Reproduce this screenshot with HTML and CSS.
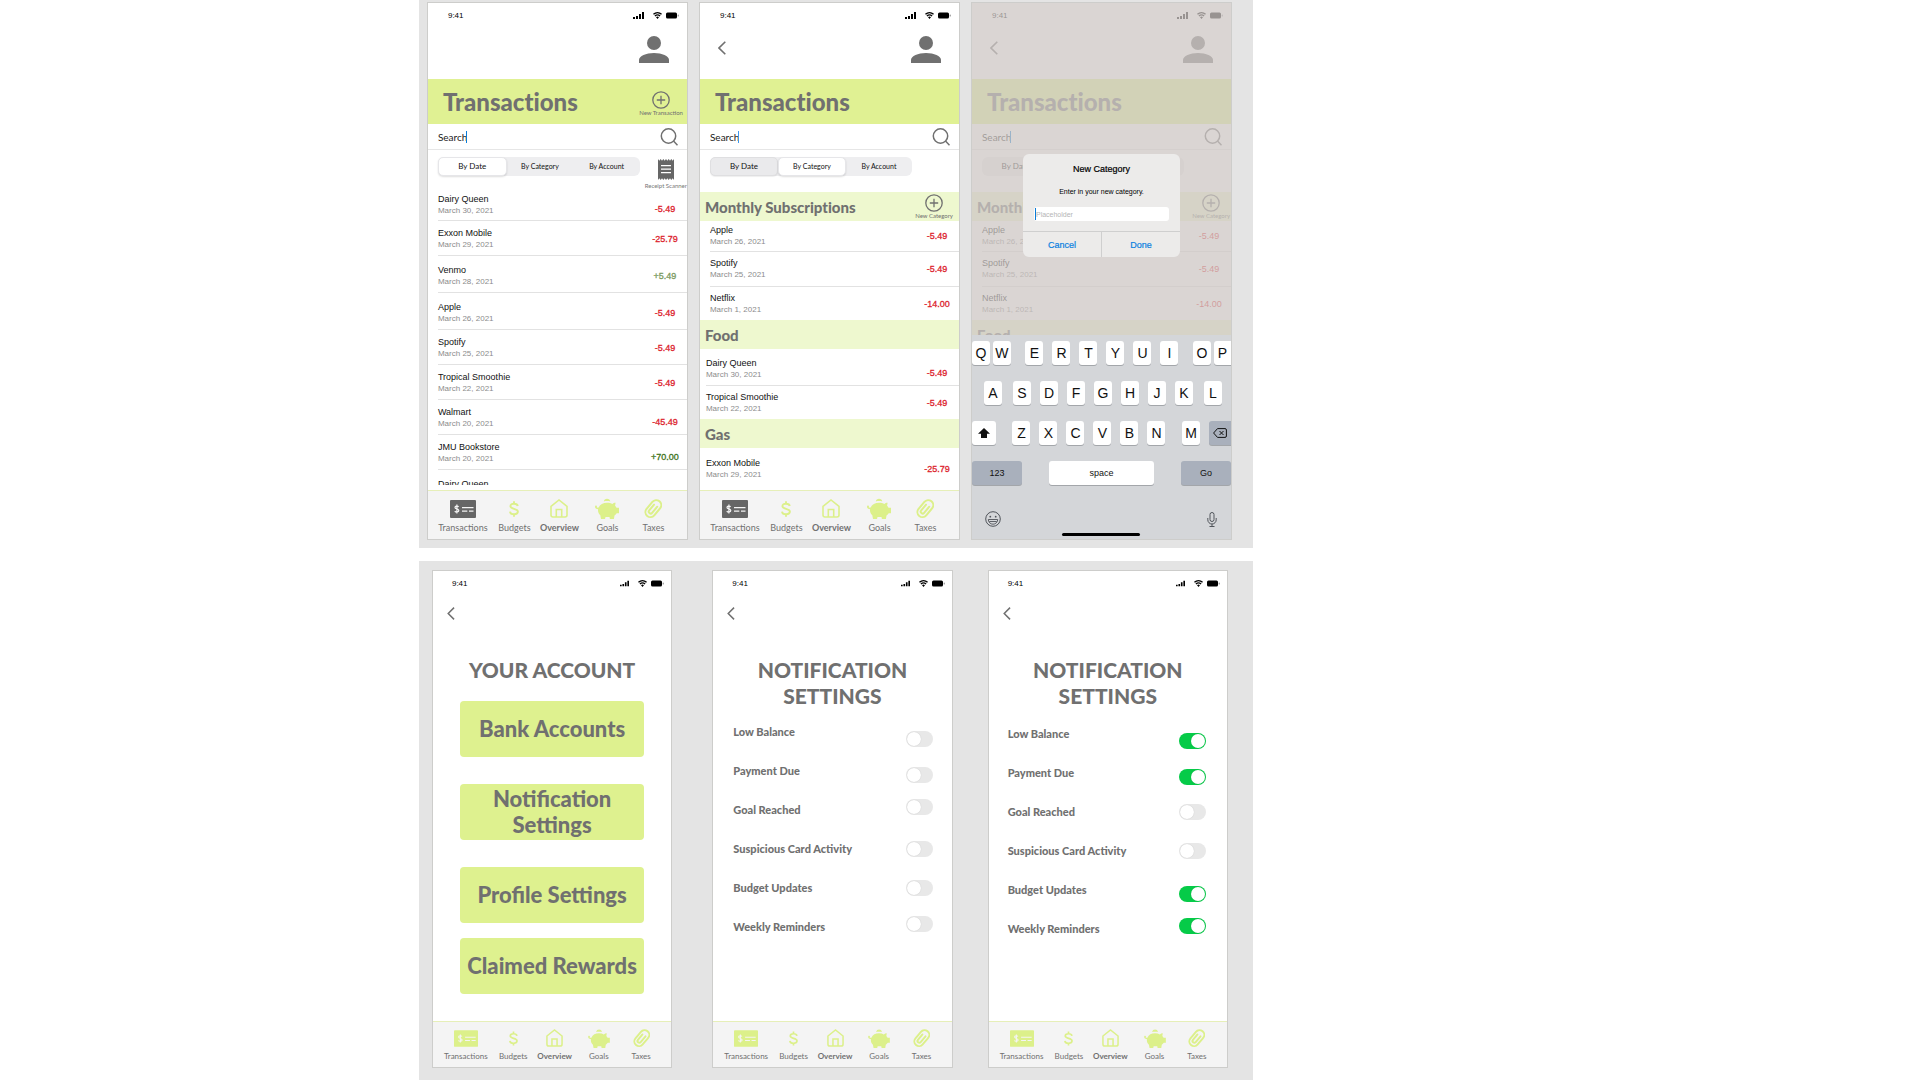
FILE: index.html
```html
<!DOCTYPE html>
<html lang="en">
<head>
<meta charset="utf-8">
<meta name="viewport" content="width=device-width, initial-scale=1">
<title>Budget app screens</title>
<link rel="stylesheet" href="styles.css">
</head>
<body>
<svg class="sprite" aria-hidden="true">
  <symbol id="signal" viewBox="0 0 11 7"><path d="M0 5h2v2H0zM3 4h2v3H3zM6 2h2v5H6zM9 0h2v7H9z"/></symbol>
  <symbol id="wifi" viewBox="0 0 16 12"><path d="M8 12l2.6-3a4 4 0 0 0-5.2 0zM4.2 7.700a6 6 0 0 1 7.600 0l1.600-1.800a8.500 8.500 0 0 0-10.800 0zM1.600 4.700a10 10 0 0 1 12.800 0L16 2.900a12.400 12.400 0 0 0-16 0z"/></symbol>
  <symbol id="battery" viewBox="0 0 13 7"><rect width="11" height="6" y=".5" rx="1.500"/><rect x="11.700" y="2.500" width="1" height="2" rx=".5" opacity=".5"/></symbol>
  <symbol id="person" viewBox="0 0 30 27"><circle cx="15" cy="7" r="7"/><path d="M0 27v-3c0-4 7-7 15-7s15 3 15 7v3z"/></symbol>
  <symbol id="back" viewBox="0 0 8 14"><path d="M7.300.7L1 7l6.300 6.300" fill="none" stroke="currentColor" stroke-width="1.600"/></symbol>
  <symbol id="plus" viewBox="0 0 18 18"><g fill="none" stroke="currentColor" stroke-width="1.300"><circle cx="9" cy="9" r="8.200"/><path d="M9 4.800v8.400M4.800 9h8.400"/></g></symbol>
  <symbol id="glass" viewBox="0 0 18 18"><g fill="none" stroke="currentColor" stroke-width="1.500"><circle cx="8.500" cy="8" r="7.200"/><path d="M13.500 13l4 4.200"/></g></symbol>
  <symbol id="receipt" viewBox="0 0 16 21"><path fill-rule="evenodd" d="M0 0l1.300 1.800L2.700 0 4 1.800 5.300 0l1.400 1.800L8 0l1.300 1.800L10.700 0 12 1.800 13.300 0l1.400 1.800L16 0v21l-1.300-1.800-1.400 1.800-1.300-1.800-1.300 1.800-1.400-1.800L8 21l-1.300-1.800L5.300 21 4 19.200 2.700 21l-1.400-1.800L0 21zM3 6v1.200h10V6zm0 3.500v1.200h10V9.500zM3 13v1.200h10V13z"/></symbol>
  <symbol id="card" viewBox="0 0 26 18"><rect width="26" height="18" rx="1"/><path d="M8.600 6.800C8 5.900 5 5.600 5 7.400 5 9.200 8.800 8.600 8.800 10.600c0 1.800-3.300 1.700-4 .5M6.900 4.600V13.400M12 7.600h11.500M12 11.200h5.300M19 11.200h4.500" fill="none" stroke="#f4f4f4" stroke-width="1.200"/></symbol>
  <symbol id="dollar" viewBox="0 0 10 16"><path d="M8.800 5C8.500 3.200 7 2.700 5 2.700 3 2.700 1.400 3.400 1.400 5.200c0 3.300 7.500 1.900 7.500 5.400 0 1.900-1.700 2.700-3.800 2.700-2.300 0-3.900-.8-4.100-2.700M5 .2v3M5 12.800v3" fill="none" stroke="currentColor" stroke-width="1.900"/></symbol>
  <symbol id="home" viewBox="0 0 18 19"><g fill="none" stroke="currentColor" stroke-width="1.600"><path d="M1 7.400L9 1l8 6.400V16a2 2 0 0 1-2 2H3a2 2 0 0 1-2-2z"/><path d="M6.300 18V10.500h5.400V18"/></g></symbol>
  <symbol id="pig" viewBox="0 0 24 21"><path d="M8.800 3.400a3.300 3.300 0 0 1 6.500 0c-2-.5-4.500-.5-6.500 0z"/><path d="M12 4.800c2.200 0 4 .4 5.400 1.200.8-.9 2-1.400 3.200-1.300l-.5 3c.7.700 1.100 1.400 1.400 2.100H24v5.400h-2.300c-.6.900-1.300 1.600-2.200 2.200l-.6 3.600h-4l-.4-1.900h-4L10 21H6l-.7-3.700C3.800 15.900 3 14.200 3 12.300c0-.4 0-.7.100-1.100C1.200 11.200 0 10.200 0 8.700c0-.8.500-1.300 1.100-1.300.5 0 .9.400.9.900 0 .3-.1.500-.4.700.4.500 1.100.8 2 .6C4.900 6.500 8.100 4.800 12 4.800z"/></symbol>
  <symbol id="clip" viewBox="0 0 18 20"><g transform="rotate(40 9 10)" fill="none" stroke="currentColor" stroke-width="2" stroke-linecap="round"><path d="M14 5.500v8.500a5 5 0 0 1-10 0V5a5 5 0 0 1 10 0"/><path d="M10.800 5.500v8a1.900 1.900 0 0 1-3.800 0V6"/></g></symbol>
  <symbol id="shift" viewBox="0 0 12 10"><path d="M6 0l6 5.700H9V10H3V5.700H0z"/></symbol>
  <symbol id="erase" viewBox="0 0 14 10"><path d="M4.500.6H12a1.400 1.400 0 0 1 1.400 1.400v6A1.400 1.400 0 0 1 12 9.400H4.500L.6 5zM6.500 3l4 4M10.500 3l-4 4" fill="none" stroke="currentColor"/></symbol>
  <symbol id="smile" viewBox="0 0 16 16"><circle cx="8" cy="8" r="7.300" fill="none" stroke="currentColor"/><circle cx="5.300" cy="5.700" r=".9"/><circle cx="10.700" cy="5.700" r=".9"/><path d="M3.300 8.500h9.400a4.700 4.700 0 0 1-9.400 0zM4.300 10.500h7.400" fill="none" stroke="currentColor" stroke-width=".9"/></symbol>
  <symbol id="mic" viewBox="0 0 10 15"><g fill="none" stroke="currentColor"><rect x="3" y=".5" width="4" height="9" rx="2"/><path d="M.8 6v1.800a4.200 4.200 0 0 0 8.400 0V6M5 12v2.500M2.500 14.500h5"/></g></symbol>
</svg>

<main class="page">
<section class="board board-top">

  <article class="phone">
    <div class="status"><span>9:41</span><span class="status-icons"><svg class="i-signal"><use href="#signal"/></svg><svg class="i-wifi"><use href="#wifi"/></svg><svg class="i-battery"><use href="#battery"/></svg></span></div>
    <div class="topbar"><a class="profile" href="#" aria-label="Account"><svg class="i-person"><use href="#person"/></svg></a></div>
    <header class="band"><h1>Transactions</h1><button class="add"><svg class="i-plus"><use href="#plus"/></svg>New Transaction</button></header>
    <div class="search"><input type="text" aria-label="Search" placeholder="Search"><span class="caret"></span><button class="find" aria-label="Find"><svg class="i-glass"><use href="#glass"/></svg></button></div>
    <div class="tools">
      <div class="segments"><button class="on">By Date</button><button>By Category</button><button>By Account</button></div>
      <button class="scan"><svg class="i-receipt"><use href="#receipt"/></svg>Receipt Scanner</button>
    </div>
    <ul class="list scroll">
      <li class="short"><div>Dairy Queen<time>March 30, 2021</time></div><b class="low">-5.49</b></li>
      <li><div>Exxon Mobile<time>March 29, 2021</time></div><b>-25.79</b></li>
      <li class="tall"><div>Venmo<time>March 28, 2021</time></div><b class="gain soft">+5.49</b></li>
      <li class="tall"><div>Apple<time>March 26, 2021</time></div><b>-5.49</b></li>
      <li><div>Spotify<time>March 25, 2021</time></div><b>-5.49</b></li>
      <li><div>Tropical Smoothie<time>March 22, 2021</time></div><b>-5.49</b></li>
      <li><div>Walmart<time>March 20, 2021</time></div><b class="low">-45.49</b></li>
      <li><div>JMU Bookstore<time>March 20, 2021</time></div><b class="gain low">+70.00</b></li>
      <li class="tall"><div>Dairy Queen</div></li>
    </ul>
    <nav class="tabs">
      <a href="#" class="current"><svg class="i-card"><use href="#card"/></svg>Transactions</a>
      <a href="#"><svg class="i-dollar"><use href="#dollar"/></svg>Budgets</a>
      <a href="#" class="strong"><svg class="i-home"><use href="#home"/></svg>Overview</a>
      <a href="#"><svg class="i-pig"><use href="#pig"/></svg>Goals</a>
      <a href="#"><svg class="i-clip"><use href="#clip"/></svg>Taxes</a>
    </nav>
  </article>

  <article class="phone">
    <div class="status"><span>9:41</span><span class="status-icons"><svg class="i-signal"><use href="#signal"/></svg><svg class="i-wifi"><use href="#wifi"/></svg><svg class="i-battery"><use href="#battery"/></svg></span></div>
    <div class="topbar"><a class="back" href="#" aria-label="Back"><svg class="i-back"><use href="#back"/></svg></a><a class="profile" href="#" aria-label="Account"><svg class="i-person"><use href="#person"/></svg></a></div>
    <header class="band"><h1>Transactions</h1></header>
    <div class="search"><input type="text" aria-label="Search" placeholder="Search"><span class="caret light"></span><button class="find" aria-label="Find"><svg class="i-glass"><use href="#glass"/></svg></button></div>
    <div class="tools">
      <div class="segments second"><button class="off">By Date</button><button class="on">By Category</button><button>By Account</button></div>
    </div>
    <header class="group"><h2>Monthly Subscriptions</h2><button class="add"><svg class="i-plus"><use href="#plus"/></svg>New Category</button></header>
    <ul class="list">
      <li class="short"><div>Apple<time>March 26, 2021</time></div><b>-5.49</b></li>
      <li><div>Spotify<time>March 25, 2021</time></div><b>-5.49</b></li>
      <li class="last"><div>Netflix<time>March 1, 2021</time></div><b>-14.00</b></li>
    </ul>
    <header class="group"><h2>Food</h2></header>
    <ul class="list flush">
      <li class="tall"><div>Dairy Queen<time>March 30, 2021</time></div><b class="low">-5.49</b></li>
      <li class="last"><div>Tropical Smoothie<time>March 22, 2021</time></div><b>-5.49</b></li>
    </ul>
    <header class="group"><h2>Gas</h2></header>
    <ul class="list flush grow">
      <li class="last"><div>Exxon Mobile<time>March 29, 2021</time></div><b>-25.79</b></li>
    </ul>
    <nav class="tabs">
      <a href="#" class="current"><svg class="i-card"><use href="#card"/></svg>Transactions</a>
      <a href="#"><svg class="i-dollar"><use href="#dollar"/></svg>Budgets</a>
      <a href="#" class="strong"><svg class="i-home"><use href="#home"/></svg>Overview</a>
      <a href="#"><svg class="i-pig"><use href="#pig"/></svg>Goals</a>
      <a href="#"><svg class="i-clip"><use href="#clip"/></svg>Taxes</a>
    </nav>
  </article>

  <article class="phone modal-open">
    <div class="behind" inert>
      <div class="status"><span>9:41</span><span class="status-icons"><svg class="i-signal"><use href="#signal"/></svg><svg class="i-wifi"><use href="#wifi"/></svg><svg class="i-battery"><use href="#battery"/></svg></span></div>
      <div class="topbar"><a class="back" href="#" aria-label="Back"><svg class="i-back"><use href="#back"/></svg></a><a class="profile" href="#" aria-label="Account"><svg class="i-person"><use href="#person"/></svg></a></div>
      <header class="band"><h1>Transactions</h1></header>
      <div class="search"><input type="text" aria-label="Search" placeholder="Search"><span class="caret"></span><button class="find" aria-label="Find"><svg class="i-glass"><use href="#glass"/></svg></button></div>
      <div class="tools">
        <div class="segments second"><button>By Date</button><button></button><button></button></div>
      </div>
      <header class="group"><h2>Monthly</h2><button class="add"><svg class="i-plus"><use href="#plus"/></svg>New Category</button></header>
      <ul class="list">
        <li class="short"><div>Apple<time>March 26, 2021</time></div><b>-5.49</b></li>
        <li><div>Spotify<time>March 25, 2021</time></div><b>-5.49</b></li>
        <li class="last"><div>Netflix<time>March 1, 2021</time></div><b>-14.00</b></li>
      </ul>
      <header class="group"><h2>Food</h2></header>
      <div class="scrim"></div>
    </div>
    <form class="dialog" role="dialog" aria-label="New Category">
      <h2>New Category</h2>
      <label for="category">Enter in your new category.</label>
      <div class="field"><span class="caret"></span><input id="category" type="text" placeholder="Placeholder"></div>
      <div class="actions"><button type="button">Cancel</button><button type="button">Done</button></div>
    </form>
    <div class="keyboard">
      <div class="keys"><div class="tight"><button>Q</button><button>W</button></div><div><button>E</button><button>R</button><button>T</button><button>Y</button><button>U</button><button>I</button></div><div class="tight"><button>O</button><button class="cut">P</button></div></div>
      <div class="keys inset"><button>A</button><div><button>S</button><button>D</button><button>F</button><button>G</button><button>H</button><button>J</button><button>K</button></div><button>L</button></div>
      <div class="keys"><button class="shift" aria-label="Shift"><svg class="i-shift"><use href="#shift"/></svg></button><div><button>Z</button><button>X</button><button>C</button><button>V</button><button>B</button><button>N</button></div><div><button>M</button><button class="erase dark" aria-label="Delete"><svg class="i-erase"><use href="#erase"/></svg></button></div></div>
      <div class="keys words"><button class="wide dark">123</button><button class="space">space</button><button class="wide dark">Go</button></div>
      <div class="extras"><button aria-label="Emoji"><svg class="i-smile"><use href="#smile"/></svg></button><button aria-label="Dictate"><svg class="i-mic"><use href="#mic"/></svg></button></div>
      <div class="indicator"></div>
    </div>
  </article>
</section>

<section class="board board-bottom">

  <article class="phone small">
    <div class="status"><span>9:41</span><span class="status-icons"><svg class="i-signal"><use href="#signal"/></svg><svg class="i-wifi"><use href="#wifi"/></svg><svg class="i-battery"><use href="#battery"/></svg></span></div>
    <div class="topbar"><a class="back" href="#" aria-label="Back"><svg class="i-back"><use href="#back"/></svg></a></div>
    <h1>YOUR ACCOUNT</h1>
    <div class="menu"><button>Bank Accounts</button><button>Notification Settings</button><button>Profile Settings</button><button class="near">Claimed Rewards</button></div>
    <nav class="tabs">
      <a href="#"><svg class="i-card"><use href="#card"/></svg>Transactions</a>
      <a href="#"><svg class="i-dollar"><use href="#dollar"/></svg>Budgets</a>
      <a href="#" class="strong"><svg class="i-home"><use href="#home"/></svg>Overview</a>
      <a href="#"><svg class="i-pig"><use href="#pig"/></svg>Goals</a>
      <a href="#"><svg class="i-clip"><use href="#clip"/></svg>Taxes</a>
    </nav>
  </article>

  <article class="phone small">
    <div class="status"><span>9:41</span><span class="status-icons"><svg class="i-signal"><use href="#signal"/></svg><svg class="i-wifi"><use href="#wifi"/></svg><svg class="i-battery"><use href="#battery"/></svg></span></div>
    <div class="topbar"><a class="back" href="#" aria-label="Back"><svg class="i-back"><use href="#back"/></svg></a></div>
    <h1>NOTIFICATION<br>SETTINGS</h1>
    <div class="settings">
      <label class="drop">Low Balance<input type="checkbox"></label>
      <label class="dip">Payment Due<input type="checkbox"></label>
      <label class="lift">Goal Reached<input type="checkbox"></label>
      <label>Suspicious Card Activity<input type="checkbox"></label>
      <label>Budget Updates<input type="checkbox"></label>
      <label class="lift">Weekly Reminders<input type="checkbox"></label>
    </div>
    <nav class="tabs">
      <a href="#"><svg class="i-card"><use href="#card"/></svg>Transactions</a>
      <a href="#"><svg class="i-dollar"><use href="#dollar"/></svg>Budgets</a>
      <a href="#" class="strong"><svg class="i-home"><use href="#home"/></svg>Overview</a>
      <a href="#"><svg class="i-pig"><use href="#pig"/></svg>Goals</a>
      <a href="#"><svg class="i-clip"><use href="#clip"/></svg>Taxes</a>
    </nav>
  </article>

  <article class="phone small">
    <div class="status"><span>9:41</span><span class="status-icons"><svg class="i-signal"><use href="#signal"/></svg><svg class="i-wifi"><use href="#wifi"/></svg><svg class="i-battery"><use href="#battery"/></svg></span></div>
    <div class="topbar"><a class="back" href="#" aria-label="Back"><svg class="i-back"><use href="#back"/></svg></a></div>
    <h1>NOTIFICATION<br>SETTINGS</h1>
    <div class="settings chosen">
      <label class="drop">Low Balance<input type="checkbox" checked></label>
      <label class="dip">Payment Due<input type="checkbox" checked></label>
      <label>Goal Reached<input type="checkbox"></label>
      <label>Suspicious Card Activity<input type="checkbox"></label>
      <label class="dip">Budget Updates<input type="checkbox" checked></label>
      <label class="lift">Weekly Reminders<input type="checkbox" checked></label>
    </div>
    <nav class="tabs">
      <a href="#"><svg class="i-card"><use href="#card"/></svg>Transactions</a>
      <a href="#"><svg class="i-dollar"><use href="#dollar"/></svg>Budgets</a>
      <a href="#" class="strong"><svg class="i-home"><use href="#home"/></svg>Overview</a>
      <a href="#"><svg class="i-pig"><use href="#pig"/></svg>Goals</a>
      <a href="#"><svg class="i-clip"><use href="#clip"/></svg>Taxes</a>
    </nav>
  </article>
</section>
</main>
</body>
</html>
```
FILE: styles.css
```css
:root {
  --gray: #707070;
  --lime: #e0f193;
  --pale: #eef8cf;
  --sans: "Liberation Sans", Arial, sans-serif;
  --lato: Lato, sans-serif;
}

* { box-sizing: border-box; }

body {
  margin: 0;
  background: #fff;
  color: #111;
  font-family: var(--sans);
  font-size: 9px;
}

h1, h2, ul { margin: 0; padding: 0; }
a { color: inherit; text-decoration: none; }

button {
  margin: 0;
  padding: 0;
  border: 0;
  background: none;
  color: inherit;
  font: inherit;
  cursor: pointer;
}

input {
  margin: 0;
  padding: 0;
  border: 0;
  outline: 0;
  background: none;
  font: inherit;
}

svg { display: block; fill: currentColor; flex: none; }
.sprite { position: absolute; width: 0; height: 0; }

.i-signal { width: 11px; height: 7px; }
.i-wifi { width: 9px; height: 7px; }
.i-battery { width: 13px; height: 7px; }
.i-person { width: 30px; height: 27px; }
.i-back { width: 8px; height: 14px; }
.i-plus { width: 18px; height: 18px; }
.i-glass { width: 18px; height: 18px; }
.i-receipt { width: 16px; height: 21px; }
.i-card { width: 26px; height: 18px; }
.i-dollar { width: 10px; height: 16px; }
.i-home { width: 18px; height: 19px; }
.i-pig { width: 24px; height: 21px; }
.i-clip { width: 18px; height: 20px; }
.i-shift { width: 12px; height: 10px; }
.i-erase { width: 14px; height: 10px; }
.i-smile { width: 16px; height: 16px; }
.i-mic { width: 10px; height: 15px; }

/* Boards */
.page {
  display: flex;
  flex-direction: column;
  gap: 13px;
  width: 43.44%;
  min-width: 834px;
  margin-left: 21.82%;
}

.board { display: flex; background: #e4e4e4; }
.board-top { gap: 11px; padding: 2px 21px 8px 8px; }
.board-bottom { padding: 9px 25px 12px 13px; }
.board-bottom .phone:nth-child(2) { margin-left: 40px; }
.board-bottom .phone:nth-child(3) { margin-left: 35px; }

.phone {
  position: relative;
  display: flex;
  flex: 1 1 0;
  flex-direction: column;
  min-width: 0;
  border: 1px solid #cdcdcb;
  background: #fff;
}

/* Top of a screen */
.status {
  display: flex;
  align-items: center;
  justify-content: space-between;
  height: 25px;
  padding: 0 8px 0 20px;
  font-size: 8px;
  color: #000;
}
.status-icons { display: flex; align-items: center; }
.status-icons .i-wifi { margin: 0 4px 0 9px; }

.topbar {
  display: flex;
  align-items: center;
  height: 51px;
  padding: 0 18px;
  color: var(--gray);
}
.back { padding-bottom: 12px; }
.profile { margin-left: auto; padding-bottom: 9px; }

.band {
  display: flex;
  align-items: center;
  justify-content: space-between;
  height: 45px;
  padding: 0 4px 0 15px;
  background: var(--lime);
  color: var(--gray);
}
.band h1 { font: 900 24px/30px var(--lato); font-variant-ligatures: none; }
.band .add { padding-top: 4px; }

.add, .scan {
  display: flex;
  flex-direction: column;
  align-items: center;
  color: var(--gray);
  font: 6px/8px var(--lato);
}

.search {
  display: flex;
  align-items: center;
  height: 26px;
  padding: 0 9px 0 10px;
  border-bottom: 1px solid #e6e6e6;
}
.search input { width: 28px; font: 10px/12px var(--lato); }
.search input::placeholder { color: #222; opacity: 1; }
.caret { width: 1px; height: 12px; background: #0a7cd8; }
.caret.light { background: #3f97ee; }
.find { margin-left: auto; color: var(--gray); }

.tools { display: flex; justify-content: space-between; padding: 7px 0 0 10px; }
.scan { padding-top: 2px; gap: 2px; color: #777; }
.scan svg { color: #666; }

.segments {
  display: flex;
  width: 202px;
  height: 19px;
  border-radius: 6px;
  background: #eeeef0;
}
.segments button { flex: 1; border-radius: 5px; font: 7px/17px var(--lato); color: #111; }
.segments button:first-child { font-size: 8px; }
.segments .on { background: #fff; border: 1px solid #e6e6e9; box-shadow: 0 1px 2px #0002; }
.segments .off { background: #eaeaec; border: 1px solid #dfdfe1; box-shadow: 0 1px 1px #0001; }
.segments.second { margin-bottom: 16px; }

/* Transactions */
.group {
  display: flex;
  align-items: center;
  justify-content: space-between;
  height: 29px;
  padding: 0 6px 0 5px;
  background: var(--pale);
  color: var(--gray);
}
.group h2 { font: 900 15px/20px var(--lato); font-variant-ligatures: none; }

.list { list-style: none; padding-left: 10px; }
.list.flush { padding-left: 6px; }
.list.scroll { height: 295px; margin-bottom: 5px; overflow: hidden; }
.list li {
  display: flex;
  align-items: center;
  justify-content: space-between;
  height: 35px;
  border-bottom: 1px solid #e2e2e2;
  line-height: 12px;
}
.list.scroll li { padding-top: 2px; }
.list .short { height: 31px; }
.list.scroll .short { padding-top: 0; }
.list .tall, .list.scroll .tall { height: 37px; padding-top: 4px; }
.list .last { height: 33px; border-bottom: 0; }
.list .tall:last-child { align-items: flex-start; padding-top: 8px; }
.list.grow { flex: 1; }
.grow .last { height: 42px; }
.list time { display: block; color: #8c8c8c; font-size: 8px; }
.list b {
  width: 44px;
  color: #dc1f2e;
  font-weight: 400;
  text-align: center;
  -webkit-text-stroke: .3px currentColor;
}
.list .low { padding-top: 8px; }
.list .gain { color: #3f7420; }
.list .soft { color: #7a9a5e; }

/* Tab bar */
.tabs {
  display: grid;
  grid-template-columns: 52fr 51fr 39fr 57fr 35fr;
  height: 49px;
  margin-top: auto;
  padding: 6px 16px 0 9px;
  border-top: 1px solid #e6efb8;
  background: #f4f4f4;
  color: var(--gray);
  font: 9px/11px var(--lato);
}
.tabs a {
  display: grid;
  grid-template-rows: 23px 11px;
  row-gap: 2px;
  place-items: center;
  place-content: start center;
  white-space: nowrap;
}
.tabs svg { color: #dcf08a; }
.tabs .current svg { color: #666; }
.tabs .strong { font-weight: 700; }

/* Dialog over the dimmed screen */
.behind { position: relative; flex: 1 1 0; min-height: 0; overflow: hidden; }
.behind b { -webkit-text-stroke: 0; }
.behind .group { padding-right: 1px; }
.scrim { position: absolute; inset: 0; background: rgb(205 199 195 / .74); }

.dialog {
  position: absolute;
  top: 151px;
  left: 51px;
  right: 51px;
  border-radius: 6px;
  background: #ecebea;
  color: #000;
  text-align: center;
}
.dialog h2 { padding: 9px 0 11px; font: 9px/12px var(--sans); -webkit-text-stroke: .2px #000; }
.dialog label { display: block; font-size: 7px; line-height: 12px; padding-bottom: 9px; }
.field {
  display: flex;
  align-items: center;
  height: 14px;
  margin: 0 11px 10px;
  padding-left: 1px;
  border-radius: 3px;
  background: #fff;
}
.field input { width: 100%; font-size: 7px; }
.field input::placeholder { color: #b5b5b5; opacity: 1; }
.actions { display: flex; border-top: 1px solid #cfcfcf; }
.actions button { flex: 1; height: 25px; color: #0a7fe0; -webkit-text-stroke: .2px #0a7fe0; }
.actions button + button { border-left: 1px solid #cfcfcf; }

/* Keyboard */
.keyboard { padding: 6px 0 3px; background: #d4d6d9; }
.keys { display: flex; justify-content: space-between; margin-bottom: 16px; }
.keys.inset { padding: 0 9px 0 12px; }
.keys div { display: flex; gap: 9px; }
.keys .tight { gap: 3px; }
.keys button {
  display: grid;
  place-items: center;
  width: 18px;
  height: 24px;
  border-radius: 3px;
  background: #fff;
  box-shadow: 0 1px 0 #a3a6aa;
  color: #111;
  font-size: 14px;
}
.keys .cut { width: 17px; border-radius: 3px 0 0 3px; }
.keys .shift { width: 24px; }
.keys .erase { width: 22px; border-radius: 3px 0 0 3px; }
.keys .wide { width: 50px; }
.keys .space { width: 105px; }
.keys.words button { font-size: 9px; }
.keys .dark { background: #a9b0bc; }
.extras { display: flex; justify-content: space-between; padding: 10px 14px 6px 13px; color: #50545a; }
.indicator { width: 78px; height: 3px; margin: 0 auto; border-radius: 2px; background: #000; }

/* Account and notification screens */
.small .status { padding: 0 7px 0 19px; }
.small .i-signal { width: 9px; }
.small .topbar { height: 35px; padding: 0 14px; }
.small .back { padding-bottom: 0; }
.small .i-back { height: 13px; }
.small h1 { padding-top: 26px; color: var(--gray); font: 900 21px/26px var(--lato); text-align: center; }

.menu { display: flex; flex-direction: column; gap: 27px; padding: 18px 27px 27px; }
.menu button {
  height: 56px;
  border-radius: 4px;
  background: #def18f;
  color: var(--gray);
  font: 900 22px/26px var(--lato);
}
.menu .near { margin-top: -12px; }

.settings { padding: 3px 19px 0 20px; }
.settings.chosen { padding: 5px 21px 0 19px; }
.settings label {
  display: flex;
  align-items: center;
  justify-content: space-between;
  height: 39px;
  color: var(--gray);
  font: 900 11px/14px var(--lato);
}
.settings input {
  width: 27px;
  height: 16px;
  border-radius: 8px;
  background: #e8e8e8;
  appearance: none;
}
.settings input::before {
  content: "";
  display: block;
  width: 14px;
  height: 14px;
  margin: 1px;
  border-radius: 50%;
  background: #fff;
  box-shadow: 0 0 1px #0003;
}
.settings input:checked { background: #06cb48; }
.settings input:checked::before { margin-left: 12px; }
.drop input { margin-top: 15px; }
.dip input { margin-top: 8px; }
.lift input { margin-bottom: 5px; }

.small .tabs { height: 46px; padding: 5px 14px 0 9px; font-size: 8px; }
.small .tabs a { grid-template-rows: 22px 11px; }
.small .i-card { width: 24px; height: 17px; }
.small .i-dollar { width: 9px; height: 15px; }
.small .i-home { width: 17px; height: 18px; }
.small .i-pig { width: 22px; height: 19px; }
.small .i-clip { width: 17px; height: 19px; }
```
